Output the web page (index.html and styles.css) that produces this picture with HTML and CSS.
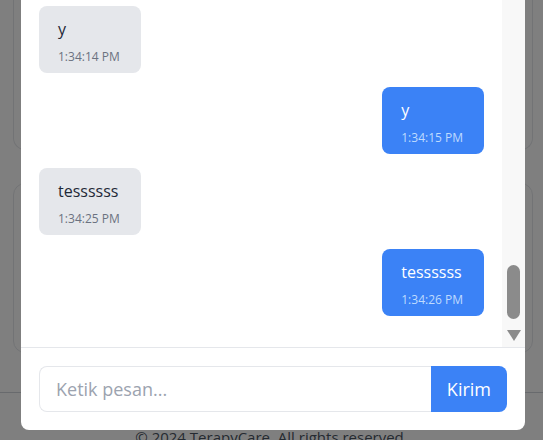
FILE: index.html
```html
<!DOCTYPE html>
<html lang="id">
<head>
<meta charset="utf-8">
<title>TerapyCare Chat</title>
<link rel="stylesheet" href="styles.css">
</head>
<body>
<div class="page">
  <div class="card card-first"></div>
  <div class="card card-second"></div>
  <footer class="footer">© 2024 TerapyCare. All rights reserved.</footer>
</div>

<div class="overlay">
  <div class="modal">
    <div class="chat-body">
      <div class="messages">
        <div class="msg in"><div class="msg-text">y</div><div class="msg-time">1:34:14 PM</div></div>
        <div class="msg out"><div class="msg-text">y</div><div class="msg-time">1:34:15 PM</div></div>
        <div class="msg in"><div class="msg-text">tessssss</div><div class="msg-time">1:34:25 PM</div></div>
        <div class="msg out"><div class="msg-text">tessssss</div><div class="msg-time">1:34:26 PM</div></div>
      </div>
      <div class="scrollbar">
        <div class="scroll-thumb"></div>
        <div class="scroll-arrow"></div>
      </div>
    </div>
    <form class="composer">
      <input class="composer-input" type="text" placeholder="Ketik pesan...">
      <button class="composer-send" type="button">Kirim</button>
    </form>
  </div>
</div>
</body>
</html>
```
FILE: styles.css
```css
* { box-sizing: border-box; }

html, body {
  margin: 0;
  height: 100%;
  overflow: hidden;
}

body {
  background: #ffffff;
  font-family: "Open Sans", "Noto Sans", sans-serif;
  color: #1f2937;
}

.page {
  display: flex;
  flex-direction: column;
  padding: 0 10px 0 13px;
}

.card {
  background: #ffffff;
  border: 1px solid #e5e7eb;
  border-radius: 12px;
}

.card-first {
  height: 150px;
  border-top: none;
  border-top-left-radius: 0;
  border-top-right-radius: 0;
}

.card-second {
  margin-top: 33px;
  height: 170px;
}

.footer {
  margin: 39px -10px 0 -13px;
  border-top: 1px solid #d1d5db;
  padding-top: 33px;
  text-align: center;
  font-size: 15px;
  line-height: 22px;
  color: #4b5563;
}

.overlay {
  position: fixed;
  inset: 0;
  background: rgba(0, 0, 0, 0.5);
  display: flex;
  align-items: flex-end;
  padding: 0 0 10px 21px;
}

.modal {
  width: 504px;
  height: 500px;
  flex-shrink: 0;
  background: #ffffff;
  border-radius: 8px;
  display: flex;
  flex-direction: column;
  overflow: hidden;
}

.chat-body {
  flex: 1;
  min-height: 0;
  display: flex;
}

.messages {
  flex: 1;
  display: flex;
  flex-direction: column;
  justify-content: flex-end;
  gap: 14px;
  padding: 18px 18px 31px 18px;
  overflow: hidden;
}

.msg {
  border-radius: 8px;
  padding: 11px 21px 8px 19px;
  max-width: 75%;
  flex-shrink: 0;
}

.msg.in {
  align-self: flex-start;
  background: #e5e7eb;
  color: #1f2937;
}

.msg.out {
  align-self: flex-end;
  background: #3b82f6;
  color: #ffffff;
}

.msg-text {
  font-size: 16px;
  line-height: 24px;
}

.msg-time {
  margin-top: 8px;
  font-size: 12px;
  line-height: 16px;
}

.msg.in .msg-time { color: #6b7280; }
.msg.out .msg-time { color: #bfdbfe; }

.scrollbar {
  width: 23px;
  flex-shrink: 0;
  background: #f8f8f8;
  display: flex;
  flex-direction: column;
  justify-content: flex-end;
  align-items: flex-start;
  padding: 0 0 6px 5px;
  gap: 11px;
}

.scroll-thumb {
  width: 13px;
  height: 54px;
  border-radius: 7px;
  background: #8b8b8b;
}

.scroll-arrow {
  width: 0;
  height: 0;
  border-left: 7px solid transparent;
  border-right: 7px solid transparent;
  border-top: 11px solid #8b8b8b;
}

.composer {
  margin: 0;
  border-top: 1px solid #e5e7eb;
  padding: 18px;
  display: flex;
}

.composer-input {
  flex: 1;
  min-width: 0;
  height: 46px;
  border: 1px solid #e5e7eb;
  border-right: none;
  border-radius: 8px 0 0 8px;
  padding: 0 16px;
  font-family: inherit;
  font-size: 18px;
  color: #1f2937;
  outline: none;
}

.composer-input::placeholder { color: #9ca3af; }

.composer-send {
  height: 46px;
  border: none;
  border-radius: 0 8px 8px 0;
  background: #3b82f6;
  color: #ffffff;
  font-family: inherit;
  font-size: 18px;
  padding: 0 16px;
}
```
